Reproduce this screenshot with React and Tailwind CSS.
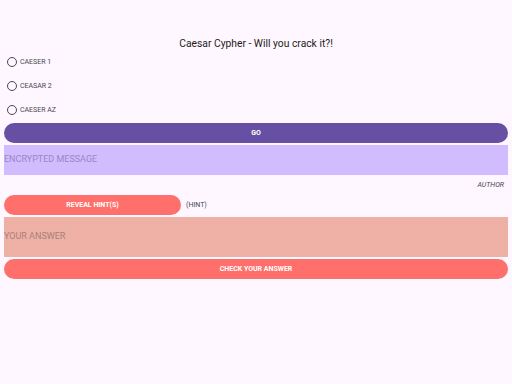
import React from "react";

function Radio({ label }) {
  return (
    <div className="flex h-[24px] items-center">
      <div className="ml-[3px] h-[10px] w-[10px] rounded-full border-[1.5px] border-[#49454f]" />
      <span className="ml-[3px] text-[7px] text-[#49454f]">{label}</span>
    </div>
  );
}

export default function App() {
  return (
    <div
      className="flex h-[384px] w-[512px] flex-col bg-[#fef7ff] px-[4px]"
      style={{ fontFamily: "Roboto, 'Noto Sans', sans-serif" }}
    >
      <div className="mt-[37px] text-center text-[10.3px] leading-[13px] text-[#1d1b20]">
        Caesar Cypher - Will you crack it?!
      </div>
      <Radio label="CAESER 1" />
      <Radio label="CEASAR 2" />
      <Radio label="CAESER AZ" />
      <button className="mt-[1px] flex h-[20px] items-center justify-center rounded-full bg-[#6750a4] text-[7px] font-bold text-white">
        GO
      </button>
      <div className="mt-[2px] flex h-[30px] items-center bg-[#d0bcff] text-[9px] text-[#9c86c4]">
        ENCRYPTED MESSAGE
      </div>
      <div className="flex h-[20px] items-center justify-end pr-[4px] text-[7px] italic text-[#49454f]">
        AUTHOR
      </div>
      <div className="flex h-[20px] items-center">
        <button className="flex h-[20px] w-[177px] items-center justify-center rounded-full bg-[#ff6f6b] text-[7px] font-bold text-white">
          REVEAL HINT(S)
        </button>
        <span className="ml-[5px] text-[7px] text-[#49454f]">(HINT)</span>
      </div>
      <div className="mt-[2px] flex h-[40px] items-center bg-[#efb0a6] text-[9px] text-[#a7807b]">
        YOUR ANSWER
      </div>
      <button className="mt-[2px] flex h-[20px] items-center justify-center rounded-full bg-[#ff6f6b] text-[7px] font-bold text-white">
        CHECK YOUR ANSWER
      </button>
    </div>
  );
}
